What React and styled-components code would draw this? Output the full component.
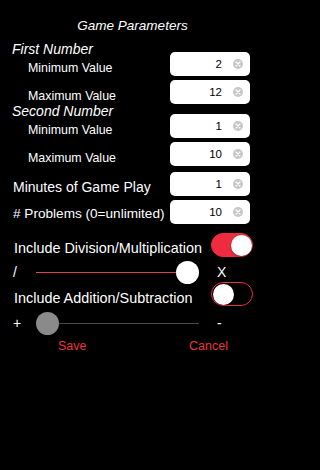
import React from 'react';
import styled, { createGlobalStyle } from 'styled-components';

const Global = createGlobalStyle`
  html, body { margin: 0; padding: 0; background: #000; }
  body { font-family: "Liberation Sans", Arial, Helvetica, sans-serif; color: #fff; }
`;

const Page = styled.div`
  width: 265px;
  height: 470px;
  background: #000;
  display: flex;
  flex-direction: column;
  overflow: hidden;
`;

const Title = styled.div`
  margin-top: 18px;
  height: 16px;
  line-height: 16px;
  font-size: 13.5px;
  font-style: italic;
  text-align: center;
`;

const SectionTitle = styled.div`
  margin-top: ${(p) => p.$top}px;
  margin-bottom: -4px;
  padding-left: 12px;
  height: 14px;
  line-height: 14px;
  font-size: 14px;
  font-style: italic;
`;

const Row = styled.div`
  display: flex;
  align-items: center;
  height: 24px;
  margin-top: ${(p) => p.$top || 0}px;
  padding-right: ${(p) => p.$right || 15}px;
`;

const Label = styled.span`
  flex: 1;
  height: 24px;
  padding-left: ${(p) => p.$indent}px;
  font-size: ${(p) => p.$size}px;
  line-height: ${(p) => 24 + 2 * p.$drop}px;
  white-space: nowrap;
`;

const Field = styled.div`
  flex: 0 0 80px;
  width: 80px;
  height: 24px;
  box-sizing: border-box;
  background: #fff;
  border-radius: 5px;
  display: flex;
  align-items: center;
  justify-content: flex-end;
  gap: 11px;
  padding-right: 7px;
`;

const Value = styled.span`
  color: #000;
  font-size: 11.5px;
  line-height: 14px;
`;

const Clear = styled.span`
  width: 10px;
  height: 10px;
  border-radius: 50%;
  background: #c6c6c6;
  display: flex;
  align-items: center;
  justify-content: center;
`;

const Switch = styled.div`
  flex: 0 0 42px;
  width: 42px;
  height: 24px;
  box-sizing: border-box;
  border-radius: 12px;
  border: 1.5px solid #ee2b3f;
  background: ${(p) => (p.$on ? '#ee2b3f' : '#000')};
  display: flex;
  align-items: center;
  justify-content: ${(p) => (p.$on ? 'flex-end' : 'flex-start')};
  padding: 0 0.5px;
`;

const Knob = styled.span`
  width: 21px;
  height: 21px;
  border-radius: 50%;
  background: #fff;
  box-shadow: 0 1px 2px rgba(0, 0, 0, 0.35);
`;

const SliderRow = styled.div`
  display: flex;
  align-items: center;
  height: 20px;
  margin-top: ${(p) => p.$top}px;
  padding-left: 13px;
`;

const Sym = styled.span`
  width: 23px;
  font-size: 14px;
  line-height: 20px;
`;

const EndSym = styled.span`
  margin-left: 18px;
  font-size: 14px;
  line-height: 20px;
`;

const Track = styled.div`
  position: relative;
  width: 163px;
  height: 20px;
`;

const Rail = styled.div`
  position: absolute;
  left: 0;
  right: 0;
  top: 9.5px;
  height: 1px;
  background: #4a4a4a;
`;

const Fill = styled.div`
  position: absolute;
  left: 0;
  top: 9.5px;
  height: 1px;
  background: #dc4452;
`;

const Thumb = styled.div`
  position: absolute;
  top: -1.5px;
  width: 23px;
  height: 23px;
  border-radius: 50%;
  background: ${(p) => (p.$muted ? '#8a8a8a' : '#fff')};
`;

const Buttons = styled.div`
  display: flex;
  justify-content: space-between;
  margin-top: 5px;
  padding: 0 37px 0 58px;
`;

const TextButton = styled.span`
  color: #e8363f;
  font-size: 12.5px;
  line-height: 16px;
`;

function ClearIcon() {
  return (
    <Clear>
      <svg width="6" height="6" viewBox="0 0 6 6">
        <path d="M1 1 L5 5 M5 1 L1 5" stroke="#fff" strokeWidth="1.2" strokeLinecap="round" />
      </svg>
    </Clear>
  );
}

function FieldRow({ label, value, indent, size, drop, top }) {
  return (
    <Row $top={top}>
      <Label $indent={indent} $size={size} $drop={drop}>{label}</Label>
      <Field>
        <Value>{value}</Value>
        <ClearIcon />
      </Field>
    </Row>
  );
}

function Slider({ value, muted }) {
  const width = 163;
  const thumbLeft = value * (width - 23);
  return (
    <Track>
      <Rail />
      <Fill style={{ width: value > 0 ? thumbLeft + 11.5 : 0 }} />
      <Thumb $muted={muted} style={{ left: thumbLeft }} />
    </Track>
  );
}

export default function App() {
  return (
    <>
      <Global />
      <Page>
        <Title>Game Parameters</Title>
        <SectionTitle $top={8}>First Number</SectionTitle>
        <FieldRow label="Minimum Value" value="2" indent={28} size={12.4} drop={4.5} />
        <FieldRow label="Maximum Value" value="12" indent={28} size={12.4} drop={4.5} top={4} />
        <SectionTitle $top={0}>Second Number</SectionTitle>
        <FieldRow label="Minimum Value" value="1" indent={28} size={12.4} drop={4.5} />
        <FieldRow label="Maximum Value" value="10" indent={28} size={12.4} drop={4.5} top={4} />
        <FieldRow label="Minutes of Game Play" value="1" indent={13} size={14} drop={3} top={6} />
        <FieldRow label="# Problems (0=unlimited)" value="10" indent={13} size={13.6} drop={2} top={4} />
        <Row $top={9} $right={12}>
          <Label $indent={14} $size={14.4} $drop={3}>Include Division/Multiplication</Label>
          <Switch $on>
            <Knob />
          </Switch>
        </Row>
        <SliderRow $top={5}>
          <Sym>/</Sym>
          <Slider value={1} />
          <EndSym>X</EndSym>
        </SliderRow>
        <Row $right={12}>
          <Label $indent={14} $size={14.4} $drop={4}>Include Addition/Subtraction</Label>
          <Switch>
            <Knob />
          </Switch>
        </Row>
        <SliderRow $top={7}>
          <Sym>+</Sym>
          <Slider value={0} muted />
          <EndSym>-</EndSym>
        </SliderRow>
        <Buttons>
          <TextButton>Save</TextButton>
          <TextButton>Cancel</TextButton>
        </Buttons>
      </Page>
    </>
  );
}
